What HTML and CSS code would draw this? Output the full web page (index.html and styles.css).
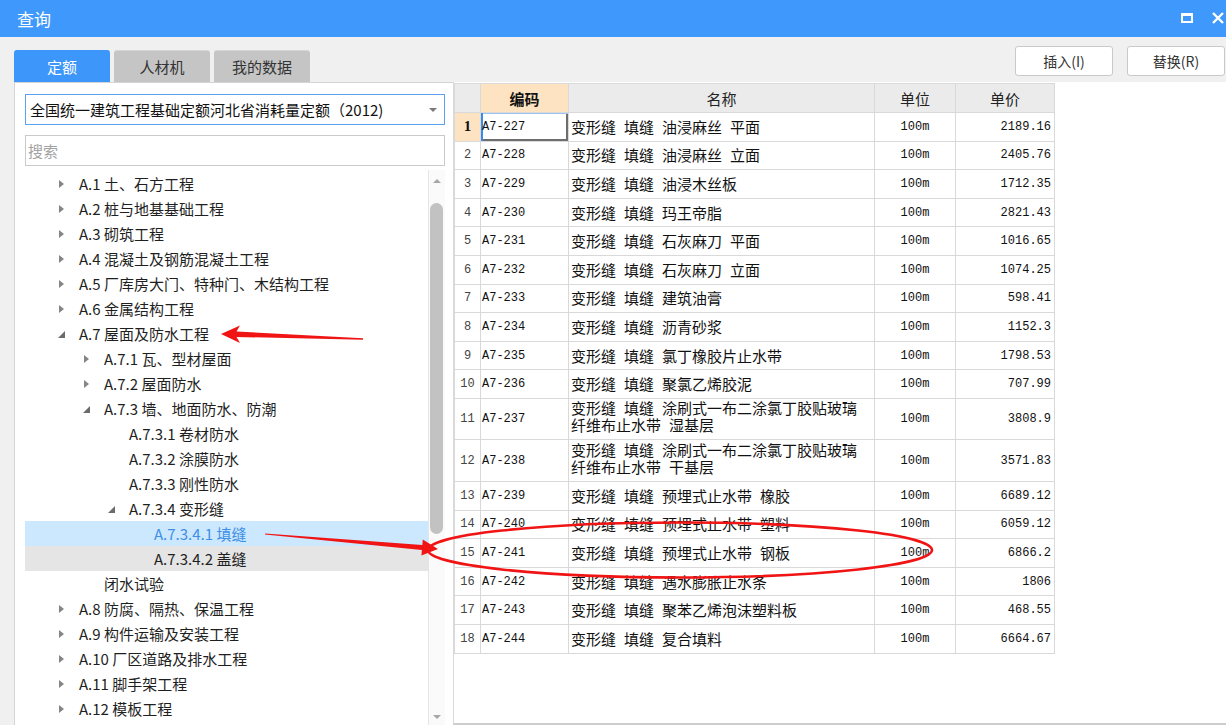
FILE: index.html
```html
<!DOCTYPE html>
<html lang="zh-CN">
<head>
<meta charset="utf-8">
<title>查询</title>
<link rel="stylesheet" href="styles.css">
</head>
<body>
<div class="window">
  <div class="titlebar">
    <span class="title">查询</span>
    <div class="win-ctrls">
      <span class="max-icon"></span>
      <svg class="close-icon" width="12" height="12" viewBox="0 0 12 12"><path d="M1 1L11 11M11 1L1 11" stroke="#fff" stroke-width="2.4" fill="none"/></svg>
    </div>
  </div>
  <div class="topbar">
    <div class="tabs">
      <div class="tab active">定额</div>
      <div class="tab">人材机</div>
      <div class="tab">我的数据</div>
    </div>
    <div class="actions">
      <div class="btn">插入(I)</div>
      <div class="btn">替换(R)</div>
    </div>
  </div>
  <div class="panes">
    <div class="left">
      <div class="select">全国统一建筑工程基础定额河北省消耗量定额（2012)<span class="caret"></span></div>
      <div class="search">搜索</div>
      <div class="tree-wrap">
        <ul class="tree">
          <li class="row l1"><span class="tg"><span class="tri-c"></span></span>A.1 土、石方工程</li>
          <li class="row l1"><span class="tg"><span class="tri-c"></span></span>A.2 桩与地基基础工程</li>
          <li class="row l1"><span class="tg"><span class="tri-c"></span></span>A.3 砌筑工程</li>
          <li class="row l1"><span class="tg"><span class="tri-c"></span></span>A.4 混凝土及钢筋混凝土工程</li>
          <li class="row l1"><span class="tg"><span class="tri-c"></span></span>A.5 厂库房大门、特种门、木结构工程</li>
          <li class="row l1"><span class="tg"><span class="tri-c"></span></span>A.6 金属结构工程</li>
          <li class="row l1"><span class="tg"><svg class="tri-e" width="7" height="7" viewBox="0 0 7 7"><polygon points="7,0 7,7 0,7" fill="#6b6b6b"/></svg></span>A.7 屋面及防水工程</li>
          <li class="row l2"><span class="tg"><span class="tri-c"></span></span>A.7.1 瓦、型材屋面</li>
          <li class="row l2"><span class="tg"><span class="tri-c"></span></span>A.7.2 屋面防水</li>
          <li class="row l2"><span class="tg"><svg class="tri-e" width="7" height="7" viewBox="0 0 7 7"><polygon points="7,0 7,7 0,7" fill="#6b6b6b"/></svg></span>A.7.3 墙、地面防水、防潮</li>
          <li class="row l3"><span class="tg"></span>A.7.3.1 卷材防水</li>
          <li class="row l3"><span class="tg"></span>A.7.3.2 涂膜防水</li>
          <li class="row l3"><span class="tg"></span>A.7.3.3 刚性防水</li>
          <li class="row l3"><span class="tg"><svg class="tri-e" width="7" height="7" viewBox="0 0 7 7"><polygon points="7,0 7,7 0,7" fill="#6b6b6b"/></svg></span>A.7.3.4 变形缝</li>
          <li class="row l4 selected"><span class="tg"></span>A.7.3.4.1 填缝</li>
          <li class="row l4 hover"><span class="tg"></span>A.7.3.4.2 盖缝</li>
          <li class="row l2"><span class="tg"></span>闭水试验</li>
          <li class="row l1"><span class="tg"><span class="tri-c"></span></span>A.8 防腐、隔热、保温工程</li>
          <li class="row l1"><span class="tg"><span class="tri-c"></span></span>A.9 构件运输及安装工程</li>
          <li class="row l1"><span class="tg"><span class="tri-c"></span></span>A.10 厂区道路及排水工程</li>
          <li class="row l1"><span class="tg"><span class="tri-c"></span></span>A.11 脚手架工程</li>
          <li class="row l1"><span class="tg"><span class="tri-c"></span></span>A.12 模板工程</li>
        </ul>
        <div class="vscroll">
          <div class="sb-arrow"><span class="tri-up"></span></div>
          <div class="sb-thumb"></div>
          <div class="sb-space"></div>
          <div class="sb-arrow"><span class="tri-down"></span></div>
        </div>
      </div>
    </div>
    <div class="right">
      <table class="grid">
        <colgroup>
          <col class="c-num"><col class="c-code"><col class="c-name"><col class="c-unit"><col class="c-price">
        </colgroup>
        <thead>
          <tr><th class="corner"></th><th class="h-code">编码</th><th>名称</th><th>单位</th><th>单价</th></tr>
        </thead>
        <tbody>
          <tr class="cur"><td class="num">1</td><td class="code focus">A7-227</td><td class="name">变形缝 填缝 油浸麻丝 平面</td><td class="unit">100m</td><td class="price">2189.16</td></tr>
          <tr><td class="num">2</td><td class="code">A7-228</td><td class="name">变形缝 填缝 油浸麻丝 立面</td><td class="unit">100m</td><td class="price">2405.76</td></tr>
          <tr><td class="num">3</td><td class="code">A7-229</td><td class="name">变形缝 填缝 油浸木丝板</td><td class="unit">100m</td><td class="price">1712.35</td></tr>
          <tr><td class="num">4</td><td class="code">A7-230</td><td class="name">变形缝 填缝 玛王帝脂</td><td class="unit">100m</td><td class="price">2821.43</td></tr>
          <tr><td class="num">5</td><td class="code">A7-231</td><td class="name">变形缝 填缝 石灰麻刀 平面</td><td class="unit">100m</td><td class="price">1016.65</td></tr>
          <tr><td class="num">6</td><td class="code">A7-232</td><td class="name">变形缝 填缝 石灰麻刀 立面</td><td class="unit">100m</td><td class="price">1074.25</td></tr>
          <tr><td class="num">7</td><td class="code">A7-233</td><td class="name">变形缝 填缝 建筑油膏</td><td class="unit">100m</td><td class="price">598.41</td></tr>
          <tr><td class="num">8</td><td class="code">A7-234</td><td class="name">变形缝 填缝 沥青砂浆</td><td class="unit">100m</td><td class="price">1152.3</td></tr>
          <tr><td class="num">9</td><td class="code">A7-235</td><td class="name">变形缝 填缝 氯丁橡胶片止水带</td><td class="unit">100m</td><td class="price">1798.53</td></tr>
          <tr><td class="num">10</td><td class="code">A7-236</td><td class="name">变形缝 填缝 聚氯乙烯胶泥</td><td class="unit">100m</td><td class="price">707.99</td></tr>
          <tr class="tall"><td class="num">11</td><td class="code">A7-237</td><td class="name">变形缝 填缝 涂刷式一布二涂氯丁胶贴玻璃<br>纤维布止水带 湿基层</td><td class="unit">100m</td><td class="price">3808.9</td></tr>
          <tr class="tall"><td class="num">12</td><td class="code">A7-238</td><td class="name">变形缝 填缝 涂刷式一布二涂氯丁胶贴玻璃<br>纤维布止水带 干基层</td><td class="unit">100m</td><td class="price">3571.83</td></tr>
          <tr><td class="num">13</td><td class="code">A7-239</td><td class="name">变形缝 填缝 预埋式止水带 橡胶</td><td class="unit">100m</td><td class="price">6689.12</td></tr>
          <tr><td class="num">14</td><td class="code">A7-240</td><td class="name">变形缝 填缝 预埋式止水带 塑料</td><td class="unit">100m</td><td class="price">6059.12</td></tr>
          <tr><td class="num">15</td><td class="code">A7-241</td><td class="name">变形缝 填缝 预埋式止水带 钢板</td><td class="unit">100m</td><td class="price">6866.2</td></tr>
          <tr><td class="num">16</td><td class="code">A7-242</td><td class="name">变形缝 填缝 遇水膨胀止水条</td><td class="unit">100m</td><td class="price">1806</td></tr>
          <tr><td class="num">17</td><td class="code">A7-243</td><td class="name">变形缝 填缝 聚苯乙烯泡沫塑料板</td><td class="unit">100m</td><td class="price">468.55</td></tr>
          <tr><td class="num">18</td><td class="code">A7-244</td><td class="name">变形缝 填缝 复合填料</td><td class="unit">100m</td><td class="price">6664.67</td></tr>
        </tbody>
      </table>
    </div>
  </div>
  <svg class="annot" width="1226" height="725" viewBox="0 0 1226 725">
    <polygon points="221,334 240,325.5 236.5,331.5 363,338.3 363,339.7 236.5,337 240,343" fill="#f01414"/>
    <polygon points="265,533.4 422.3,545.1 422.8,539.6 438,549 421.4,555.6 421.9,550.1 265,534.6" fill="#f01414"/>
    <ellipse cx="680" cy="550" rx="252" ry="27.5" fill="none" stroke="#f01414" stroke-width="2.6"/>
  </svg>
</div>
</body>
</html>
```
FILE: styles.css
```css
* { box-sizing: border-box; }
body {
  margin: 0;
  width: 1226px;
  height: 725px;
  overflow: hidden;
  background: #f0f0f0;
  font-family: "Noto Sans CJK SC", "Noto Sans", sans-serif;
  color: #1a1a1a;
}
.window {
  position: relative;
  width: 1226px;
  height: 725px;
  display: flex;
  flex-direction: column;
}
.titlebar {
  height: 37px;
  flex: none;
  background: #3f98fc;
  display: flex;
  align-items: center;
  padding-left: 17px;
  color: #fff;
}
.title { font-size: 17px; }
.win-ctrls {
  margin-left: auto;
  display: flex;
  align-items: center;
  gap: 19px;
  margin-right: 2px;
  padding-bottom: 2px;
}
.max-icon {
  width: 12px;
  height: 10px;
  border: 2px solid #fff;
  border-top-width: 3px;
}
.topbar {
  height: 45px;
  flex: none;
  display: flex;
}
.tabs {
  display: flex;
  gap: 4px;
  margin: 13px 0 0 14px;
  height: 32px;
}
.tab {
  width: 96px;
  height: 32px;
  display: flex;
  align-items: center;
  justify-content: center;
  font-size: 15px;
  background: #c5c5c5;
  color: #333;
  border-radius: 3px 3px 0 0;
  border-top: 1px solid #d6d6d6;
}
.tab.active {
  background: #3d96f9;
  color: #fff;
  border-top-color: #3d96f9;
}
.actions {
  margin-left: auto;
  display: flex;
  gap: 14px;
  margin-top: 9px;
  margin-right: 1px;
}
.btn {
  width: 98px;
  height: 30px;
  border: 1px solid #c9c9c9;
  border-radius: 3px;
  background: #fff;
  font-size: 14px;
  color: #333;
  display: flex;
  align-items: center;
  justify-content: center;
}
.panes {
  flex: 1;
  display: flex;
  min-height: 0;
}
.left {
  width: 439px;
  flex: none;
  margin-left: 14px;
  background: #fff;
  border-left: 1px solid #d4d4d4;
  border-top: 1px solid #d4d4d4;
  padding: 11px 0 0 10px;
  display: flex;
  flex-direction: column;
}
.select {
  width: 420px;
  height: 31px;
  flex: none;
  border: 1px solid #5aa2ee;
  display: flex;
  align-items: center;
  padding-left: 4px;
  font-size: 15px;
  color: #111;
  position: relative;
}
.caret {
  margin-left: auto;
  margin-right: 7px;
  width: 0;
  height: 0;
  border-left: 4px solid transparent;
  border-right: 4px solid transparent;
  border-top: 4px solid #7a7a7a;
}
.search {
  margin-top: 10px;
  width: 420px;
  height: 31px;
  flex: none;
  border: 1px solid #cacaca;
  display: flex;
  align-items: center;
  padding-left: 2px;
  font-size: 15px;
  color: #a3a3a3;
}
.tree-wrap {
  margin-top: 4px;
  flex: 1;
  min-height: 0;
  width: 420px;
  display: flex;
}
.tree {
  width: 403px;
  flex: none;
  list-style: none;
  margin: 0;
  padding: 1px 0 0 0;
  overflow: hidden;
}
.row {
  height: 25px;
  line-height: 24px;
  font-size: 15px;
  color: #1f1f1f;
  display: flex;
  align-items: center;
  white-space: nowrap;
}
.row.l1 { padding-left: 33px; }
.row.l2 { padding-left: 58px; }
.row.l3 { padding-left: 83px; }
.row.l4 { padding-left: 108px; }
.row.selected { background: #cce8ff; color: #3f8fe6; }
.row.hover { background: #e5e5e5; }
.tg {
  width: 21px;
  flex: none;
  display: flex;
  align-items: center;
  height: 25px;
}
.tri-c {
  width: 0;
  height: 0;
  border-left: 5px solid #858585;
  border-top: 4px solid transparent;
  border-bottom: 4px solid transparent;
  margin-left: 1px;
}
.tri-e { display: block; margin-top: 2px; }
.vscroll {
  width: 17px;
  flex: none;
  border-left: 1px solid #e6e6e6;
  display: flex;
  flex-direction: column;
  background: #fafafa;
}
.sb-arrow {
  height: 16px;
  flex: none;
  display: flex;
  align-items: center;
  justify-content: center;
}
.tri-up {
  width: 0; height: 0;
  border-left: 4px solid transparent;
  border-right: 4px solid transparent;
  border-bottom: 4px solid #a6a6a6;
  margin-top: 6px;
}
.tri-down {
  width: 0; height: 0;
  border-left: 4px solid transparent;
  border-right: 4px solid transparent;
  border-top: 4px solid #a6a6a6;
}
.sb-thumb {
  margin: 17px 0 0 1px;
  width: 13px;
  height: 331px;
  flex: none;
  border-radius: 7px;
  background: #c2c2c2;
}
.sb-space { flex: 1; }
.right {
  flex: 1;
  background: #fff;
  border-left: 1px solid #dadada;
  border-bottom: 2px solid #cdcdcd;
  padding-top: 1px;
}
.grid {
  border-collapse: collapse;
  table-layout: fixed;
  width: 601px;
  font-size: 15px;
  border-left: 1px solid #c8c8c8;
}
.c-num { width: 26px; }
.c-code { width: 88px; }
.c-name { width: 306px; }
.c-unit { width: 81px; }
.c-price { width: 99px; }
.grid th, .grid td {
  border: 1px solid #d9d9d9;
  padding: 0;
  white-space: nowrap;
  overflow: hidden;
}
.grid th {
  height: 29px;
  background: #ebebeb;
  font-weight: normal;
  color: #222;
  font-size: 15px;
}
.grid th.h-code { background: #fde3c1; font-weight: bold; color: #111; }
.grid tbody tr { height: 28.6px; }
.grid tbody tr.tall { height: 41.5px; }
.grid td.num {
  text-align: center;
  font-family: "Liberation Mono", monospace;
  font-size: 12px;
  color: #444;
}
.grid tr.cur td.num {
  background: #fde3c1;
  font-family: "Liberation Serif", serif;
  font-weight: bold;
  font-size: 15px;
  color: #111;
}
.grid td.code {
  font-family: "Liberation Mono", monospace;
  font-size: 12px;
  padding-left: 1px;
  color: #111;
}
.grid td.focus {
  box-shadow: inset 2px 0 0 #3a8be8, inset 0 1px 0 #9fc3ee, inset -2px -2px 0 #6e6e6e;
}
.grid td.name {
  font-family: "Liberation Mono", "Noto Sans CJK SC", sans-serif;
  font-size: 15px;
  word-spacing: -1px;
  padding-left: 2px;
  color: #111;
}
.grid tr.tall td.name { line-height: 17px; }
.grid td.unit {
  text-align: center;
  font-family: "Liberation Mono", monospace;
  font-size: 12px;
  color: #111;
}
.grid td.price {
  text-align: right;
  padding-right: 3px;
  font-family: "Liberation Mono", monospace;
  font-size: 12px;
  color: #111;
}
.annot {
  position: absolute;
  left: 0;
  top: 0;
  pointer-events: none;
}
```
